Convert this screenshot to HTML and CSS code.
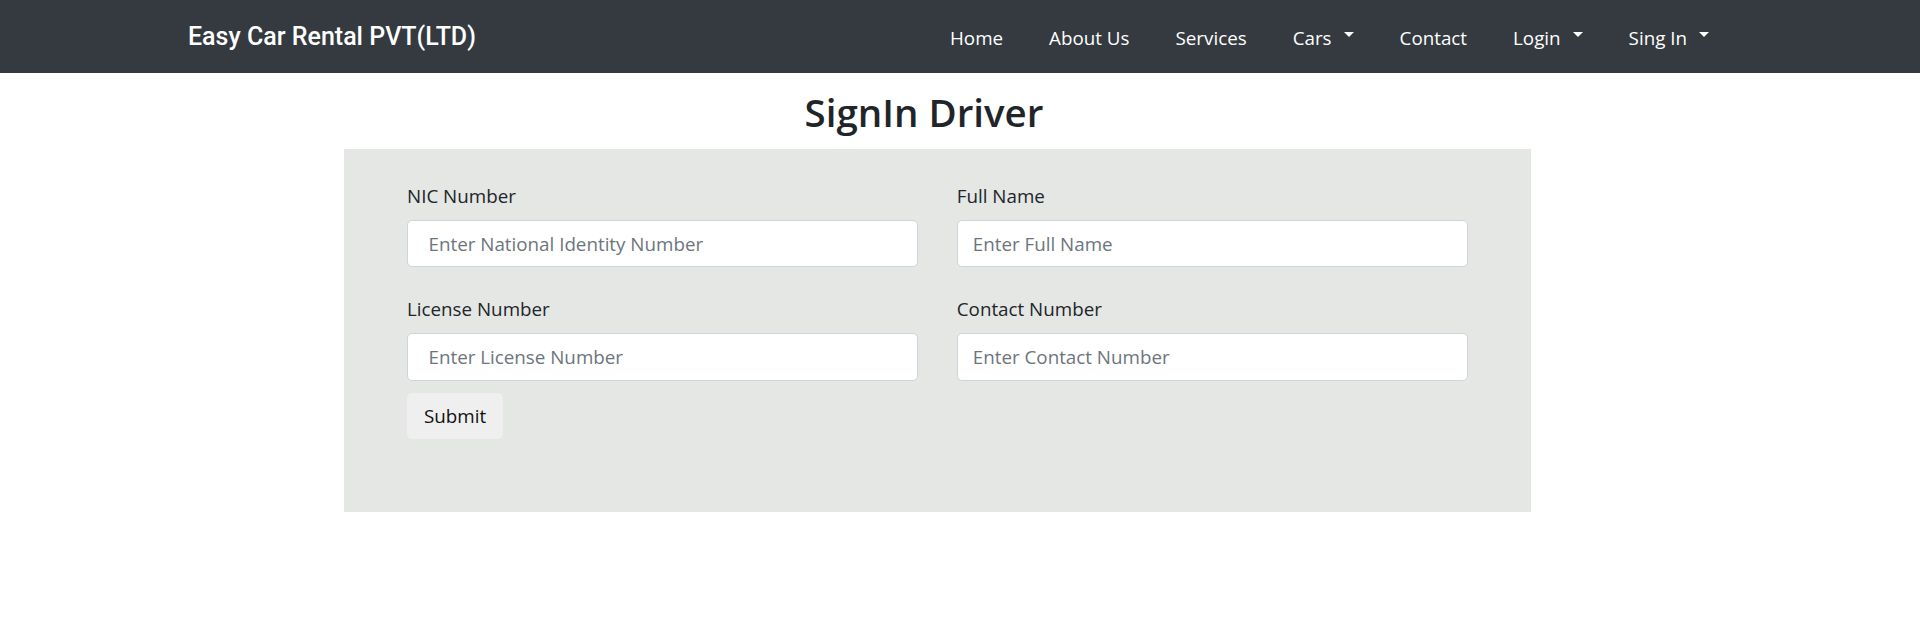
FILE: index.html
```html
<!DOCTYPE html>
<html lang="en">
<head>
<meta charset="utf-8">
<title>SignIn Driver</title>
<link rel="stylesheet" href="styles.css">
</head>
<body>
<header class="navbar">
  <a class="brand" href="#">Easy Car Rental PVT(LTD)</a>
  <nav class="nav">
    <a class="nav-link" href="#">Home</a>
    <a class="nav-link" href="#">About Us</a>
    <a class="nav-link" href="#">Services</a>
    <a class="nav-link dropdown" href="#">Cars</a>
    <a class="nav-link" href="#">Contact</a>
    <a class="nav-link dropdown" href="#">Login</a>
    <a class="nav-link dropdown" href="#">Sing In</a>
  </nav>
</header>
<main class="page">
  <h2 class="title">SignIn Driver</h2>
  <form class="panel">
    <div class="grid">
      <div class="field">
        <label class="label">NIC Number</label>
        <input class="control indent" type="text" placeholder="Enter National Identity Number">
      </div>
      <div class="field">
        <label class="label">Full Name</label>
        <input class="control" type="text" placeholder="Enter Full Name">
      </div>
      <div class="field">
        <label class="label">License Number</label>
        <input class="control indent" type="text" placeholder="Enter License Number">
      </div>
      <div class="field">
        <label class="label">Contact Number</label>
        <input class="control" type="text" placeholder="Enter Contact Number">
      </div>
    </div>
    <button class="submit" type="button">Submit</button>
  </form>
</main>
</body>
</html>
```
FILE: styles.css
```css
body {
  margin: 0;
  font-family: "Open Sans", "Noto Sans", sans-serif;
  color: #212529;
  background: #fff;
}

.navbar {
  height: 73px;
  box-sizing: border-box;
  background: #343a40;
  display: flex;
  align-items: baseline;
  justify-content: space-between;
  padding: 21.5px 211px 0 188px;
}

.brand {
  font-family: Roboto, "Noto Sans", sans-serif;
  font-weight: 500;
  font-size: 25px;
  line-height: 30px;
  color: #fff;
  text-decoration: none;
}

.nav {
  display: flex;
  align-items: baseline;
  gap: 46px;
}

.nav-link {
  font-size: 18.8px;
  line-height: 30px;
  color: #fff;
  text-decoration: none;
}

.dropdown::after {
  content: "";
  display: inline-block;
  margin-left: 12px;
  border-top: 5px solid #fff;
  border-left: 5px solid transparent;
  border-right: 5px solid transparent;
  vertical-align: 8px;
}

.page {
  width: 1187px;
  margin-left: 344px;
}

.title {
  margin: 14.7px 0 13.3px;
  padding-right: 27px;
  text-align: center;
  font-size: 38.5px;
  font-weight: 600;
  line-height: 48px;
  color: #212529;
}

.panel {
  height: 363px;
  box-sizing: border-box;
  background: #e5e7e5;
  padding: 31.7px 63px 0;
}

.grid {
  display: grid;
  grid-template-columns: 1fr 1fr;
  column-gap: 38.5px;
  row-gap: 26.5px;
}

.label {
  display: block;
  font-size: 18.8px;
  line-height: 30px;
  margin-bottom: 9.3px;
  color: #212529;
}

.control {
  display: block;
  width: 100%;
  height: 47.5px;
  box-sizing: border-box;
  padding: 0 15px;
  font-family: inherit;
  font-size: 18.8px;
  color: #212529;
  background: #fff;
  border: 1px solid #ced4da;
  border-radius: 5px;
  outline: none;
}

.control::placeholder {
  color: #6c757d;
  opacity: 1;
}

.indent {
  padding-left: 20.5px;
}

.submit {
  display: block;
  margin-top: 12.5px;
  height: 46px;
  padding: 0 17px;
  border: 0;
  border-radius: 5px;
  background: #efefef;
  font-family: inherit;
  font-size: 18.8px;
  color: #111;
}
```
